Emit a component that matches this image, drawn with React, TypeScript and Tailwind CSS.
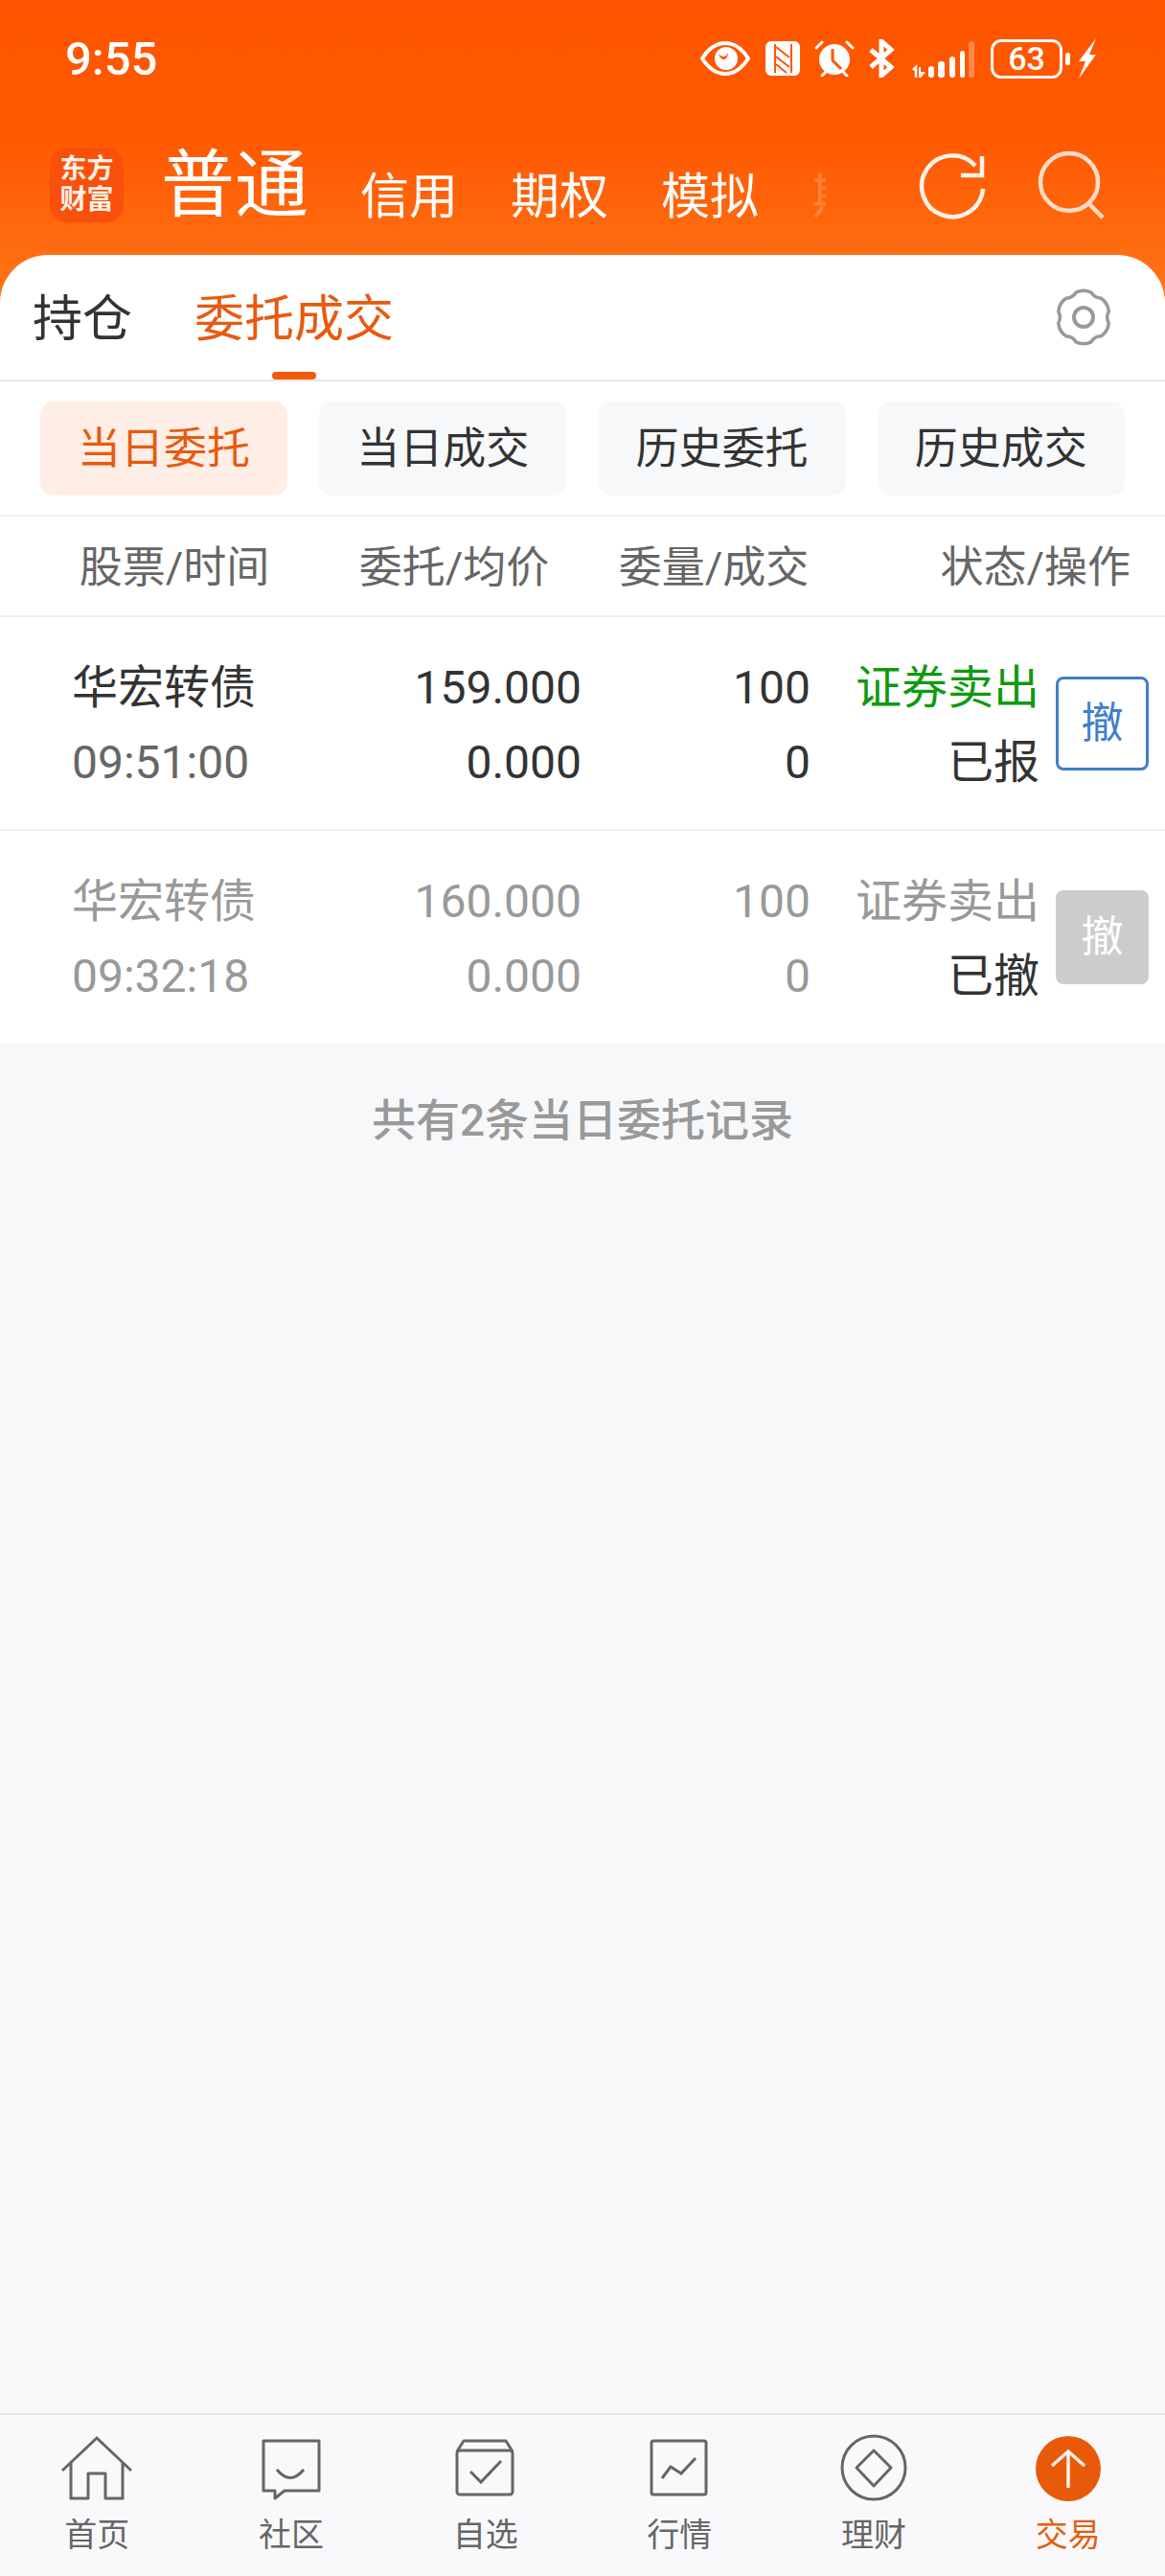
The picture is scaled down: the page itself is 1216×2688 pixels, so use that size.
const CHIPS = ["当日委托", "当日成交", "历史委托", "历史成交"];

const ORDERS = [
  { name: "华宏转债", time: "09:32:18", price: "160.000", avg: "0.000", qty: "100", done: "0", status: "已撤", cancelled: true },
];

// six-toothed settings cog, built from polar points
function gearPath() {
  const cx = 32;
  const cy = 32;
  let d = "";
  for (let i = 0; i < 6; i++) {
    const a = ((-90 + i * 60) * Math.PI) / 180;
    const pt = (r: number, off: number) =>
      `${(cx + r * Math.cos(a + off)).toFixed(1)} ${(cy + r * Math.sin(a + off)).toFixed(1)}`;
    d += `${i === 0 ? "M" : "L"}${pt(27, -0.3)} Q${pt(29.5, 0)} ${pt(27, 0.3)} Q${pt(23, 0.52)} ${pt(27, 0.75)} `;
  }
  return d + "Z";
}

function StatusBar() {
  return (
    <div className="flex h-[122px] items-center pl-[68px] pr-[70px] text-white">
      <span className="text-[49px] font-medium leading-none">9:55</span>
      <div className="ml-auto flex items-center">
        {/* eye */}
        <svg width="52" height="36" viewBox="0 0 52 36" fill="none">
          <path d="M2 18C9 7 17 2 26 2s17 5 24 16c-7 11-15 16-24 16S9 29 2 18Z" stroke="white" strokeWidth="4" />
          <circle cx="27" cy="18" r="12" fill="white" />
          <path d="M19 13c3 4 8 4 10-1 0 7-7 11-10 1Z" fill="#ff5500" />
        </svg>
        {/* nfc */}
        <svg width="36" height="36" viewBox="0 0 36 36" className="ml-[16px]">
          <rect width="36" height="36" rx="6" fill="white" />
          <path d="M10 3v30M27 3v30M11 6l14 11M11 16l14 11M11 24l11 9" stroke="#ff5500" strokeWidth="2" fill="none" />
        </svg>
        {/* alarm */}
        <svg width="42" height="38" viewBox="0 0 42 38" className="ml-[15px]" fill="none">
          <circle cx="21" cy="20" r="16" fill="white" />
          <path d="M19 9v12l9 9" stroke="#ff5500" strokeWidth="3" />
          <path d="M2 8l6-6M40 8l-6-6M8 37l4-4M34 37l-4-4" stroke="white" strokeWidth="3" strokeLinecap="round" />
        </svg>
        {/* bluetooth */}
        <svg width="28" height="40" viewBox="0 0 28 40" className="ml-[14px]" fill="none">
          <path d="M3 11l21 18-10 9V2l10 9L3 29" stroke="white" strokeWidth="5" />
        </svg>
        {/* signal */}
        <svg width="68" height="39" viewBox="0 0 68 39" className="ml-[15px]" fill="white">
          <path d="M4 31l3-3v11" stroke="white" strokeWidth="2.5" fill="none" />
          <path d="M11 28v11l4-5h-3" stroke="white" strokeWidth="2" fill="none" />
          <rect x="20" y="27" width="6" height="12" rx="3" />
          <rect x="30" y="22" width="7" height="17" rx="3" />
          <rect x="42" y="17" width="6" height="22" rx="3" />
          <rect x="53" y="11" width="5" height="28" rx="2.5" />
          <rect x="62" y="1" width="6" height="38" rx="3" opacity="0.3" />
        </svg>
        {/* battery */}
        <div className="ml-[17px] flex h-[41px] w-[75px] items-center justify-center rounded-[11px] border-[3px] border-white text-[34px] font-medium leading-none">
          63
        </div>
        <div className="ml-[3px] h-[13px] w-[5px] rounded-full bg-white" />
        <svg width="22" height="42" viewBox="0 0 22 42" className="ml-[7px]" fill="white">
          <path d="M20 0 2 24h7L2 42l18-25h-7l7-17Z" />
        </svg>
      </div>
    </div>
  );
}

function TopNav() {
  return (
    <div className="flex h-[144px] items-start pl-[52px] text-white">
      <div className="mt-[32px] flex h-[78px] w-[77px] items-center justify-center rounded-[18px] bg-[#f9500c] text-center text-[28px] font-bold leading-[32px] text-[#fff0e6]">
        东方
        <br />
        财富
      </div>
      <span className="ml-[39px] mt-[32px] text-[77px] leading-[80px]">普通</span>
      <div className="ml-[54px] mt-[54px] flex gap-[55px] text-[51px] leading-[60px]">
        <span className="shrink-0">信用</span>
        <span className="shrink-0">期权</span>
        <span className="shrink-0">模拟</span>
        {/* next tab sliding out under the edge fade */}
        <span className="w-[15px] shrink-0 overflow-hidden whitespace-nowrap opacity-20">期货</span>
      </div>
      <svg width="76" height="76" viewBox="0 0 76 76" fill="none" className="ml-[94px] mt-[36px]">
        <path d="M70 39A32 32 0 1 1 62 15" stroke="#fff3ea" strokeWidth="4.5" />
        <path d="M69 5v20H47" stroke="#fff3ea" strokeWidth="4.5" />
      </svg>
      <svg width="76" height="76" viewBox="0 0 76 76" fill="none" className="ml-[48px] mt-[34px]">
        <circle cx="36" cy="34" r="30" stroke="#ffdcc8" strokeWidth="4.5" />
        <path d="M56 56l15 15" stroke="#ffdcc8" strokeWidth="4.5" />
      </svg>
    </div>
  );
}

function TabBar() {
  return (
    <div className="flex h-[132px] items-stretch rounded-t-[50px] border-b-2 border-[#e8e8e8] bg-white pl-[34px] pr-[53px]">
      <div className="pt-[40px] text-[52px] leading-[56px] text-[#333333]">持仓</div>
      <div className="ml-[65px] flex flex-col items-center pt-[40px] text-[52px] leading-[56px] text-[#e85a0f]">
        委托成交
        <div className="mt-auto h-[8px] w-[46px] rounded-full bg-[#f25c05]" />
      </div>
      <svg width="64" height="64" viewBox="0 0 64 64" fill="none" className="ml-auto mt-[33px]">
        <path d={gearPath()} stroke="#999999" strokeWidth="3.5" strokeLinejoin="round" />
        <circle cx="32" cy="32" r="10" stroke="#999999" strokeWidth="4" />
      </svg>
    </div>
  );
}

function Row({ cols, status, btn, muted }: { cols: string[][]; status: string[]; btn: string; muted?: boolean }) {
  const top = muted ? "text-[#999999]" : "text-[#333333]";
  const bottom = muted ? "text-[#999999]" : "text-[#666666]";
  const num = muted ? "text-[#999999]" : "text-[#333333]";
  return (
    <div className="flex h-[221px] items-center bg-white pl-[75px] text-[48px] leading-[78px]">
      <div className="w-[225px] pt-[4px]">
        <div className={top}>{cols[0][0]}</div>
        <div className={bottom}>{cols[0][1]}</div>
      </div>
      <div className={`w-[307px] pt-[4px] text-right ${num}`}>
        <div>{cols[1][0]}</div>
        <div>{cols[1][1]}</div>
      </div>
      <div className={`w-[239px] pt-[4px] text-right ${num}`}>
        <div>{cols[2][0]}</div>
        <div>{cols[2][1]}</div>
      </div>
      <div className="w-[239px] pt-[4px] text-right">
        <div className={muted ? "text-[#999999]" : "text-[#0f9a0f]"}>{status[0]}</div>
        <div className="text-[#333333]">{status[1]}</div>
      </div>
      <div
        className={
          muted
            ? "ml-[17px] flex h-[98px] w-[97px] items-center justify-center rounded-[8px] bg-[#cccccc] text-[44px] text-white"
            : "ml-[17px] flex h-[98px] w-[97px] items-center justify-center rounded-[8px] border-[3px] border-[#3f7fc9] bg-white text-[44px] text-[#3f7fc9]"
        }
      >
        {btn}
      </div>
    </div>
  );
}

function NavItem({ label, active, children }: { label: string; active?: boolean; children: React.ReactNode }) {
  return (
    <div className="flex flex-col items-center">
      <svg width="80" height="80" viewBox="0 0 80 80" fill="none" stroke="#666666" strokeWidth="3" className="mt-[16px]">
        {children}
      </svg>
      <span className={`mt-[9px] text-[34px] leading-[40px] ${active ? "text-[#e2600f]" : "text-[#666666]"}`}>{label}</span>
    </div>
  );
}

export default function App() {
  const o = ORDERS[0];
  return (
    <div className="flex h-[2688px] w-[1216px] flex-col overflow-hidden bg-[#f7f8fa] font-['Roboto','Noto_Sans_CJK_SC',sans-serif]">
      <div className="bg-[linear-gradient(180deg,#ff5500_0px,#ff5700_130px,#ff7518_320px)]">
        <StatusBar />
        <TopNav />
        <TabBar />
      </div>

      <div className="grid h-[141px] grid-cols-4 gap-[33px] border-b-2 border-[#f2f2f2] bg-white px-[42px] pt-[21px]">
        {CHIPS.map((c, i) => (
          <div
            key={c}
            className={
              i === 0
                ? "flex h-[98px] items-center justify-center rounded-[14px] bg-[#ffeee6] pt-[2px] text-[45px] text-[#e85a0f]"
                : "flex h-[98px] items-center justify-center rounded-[14px] bg-[#f7f8fa] pt-[2px] text-[45px] text-[#333333]"
            }
          >
            {c}
          </div>
        ))}
      </div>

      <div className="flex h-[105px] items-center border-b-2 border-[#eeeeee] bg-white pt-[5px] text-[45px] text-[#666666]">
        <div className="w-[364px] text-center">股票/时间</div>
        <div className="w-[220px] text-center">委托/均价</div>
        <div className="w-[322px] text-center">委量/成交</div>
        <div className="flex-1 pr-[36px] text-right">状态/操作</div>
      </div>

      <div className="border-b-2 border-[#eeeeee]">
        <Row
          cols={[["华宏转债", "09:51:00"], ["159.000", "0.000"], ["100", "0"]]}
          status={["证券卖出", "已报"]}
          btn="撤"
        />
      </div>
      <Row
        muted
        cols={[[o.name, o.time], [o.price, o.avg], [o.qty, o.done]]}
        status={["证券卖出", o.status]}
        btn="撤"
      />

      <div className="mt-[55px] text-center text-[46px] font-medium leading-[52px] text-[#999999]">
        共有2条当日委托记录
      </div>

      <div className="mt-auto grid h-[170px] grid-cols-6 border-t-2 border-[#e6e6e6] bg-[#f9f9fb]">
        <NavItem label="首页">
          <path d="M4 42 40 8l36 34" />
          <path d="M13 34v37h18V45h18v26h18V34" strokeLinejoin="round" />
        </NavItem>
        <NavItem label="社区">
          <path d="M11 11h58v52H33l-10 8v-8H11Z" strokeLinejoin="round" />
          <path d="M25 41q14 17 28 0" />
        </NavItem>
        <NavItem label="自选">
          <rect x="10" y="21" width="58" height="46" rx="3" />
          <path d="M10 22l7-11h44l7 11" strokeLinejoin="round" />
          <path d="M24 43l11 11 21-22" />
        </NavItem>
        <NavItem label="行情">
          <rect x="11" y="11" width="57" height="56" rx="2" />
          <path d="M22 50l9-12 11 7 15-16" />
        </NavItem>
        <NavItem label="理财">
          <circle cx="40" cy="39" r="33" />
          <path d="M40 21 58 39 40 58 22 39Z" strokeLinejoin="round" />
        </NavItem>
        <NavItem label="交易" active>
          <circle cx="40" cy="40" r="34" fill="#e85a0a" stroke="none" />
          <path d="M40 22v38M23 37l17-15 17 15" stroke="#fff3ea" strokeWidth="3.5" />
        </NavItem>
      </div>
    </div>
  );
}
